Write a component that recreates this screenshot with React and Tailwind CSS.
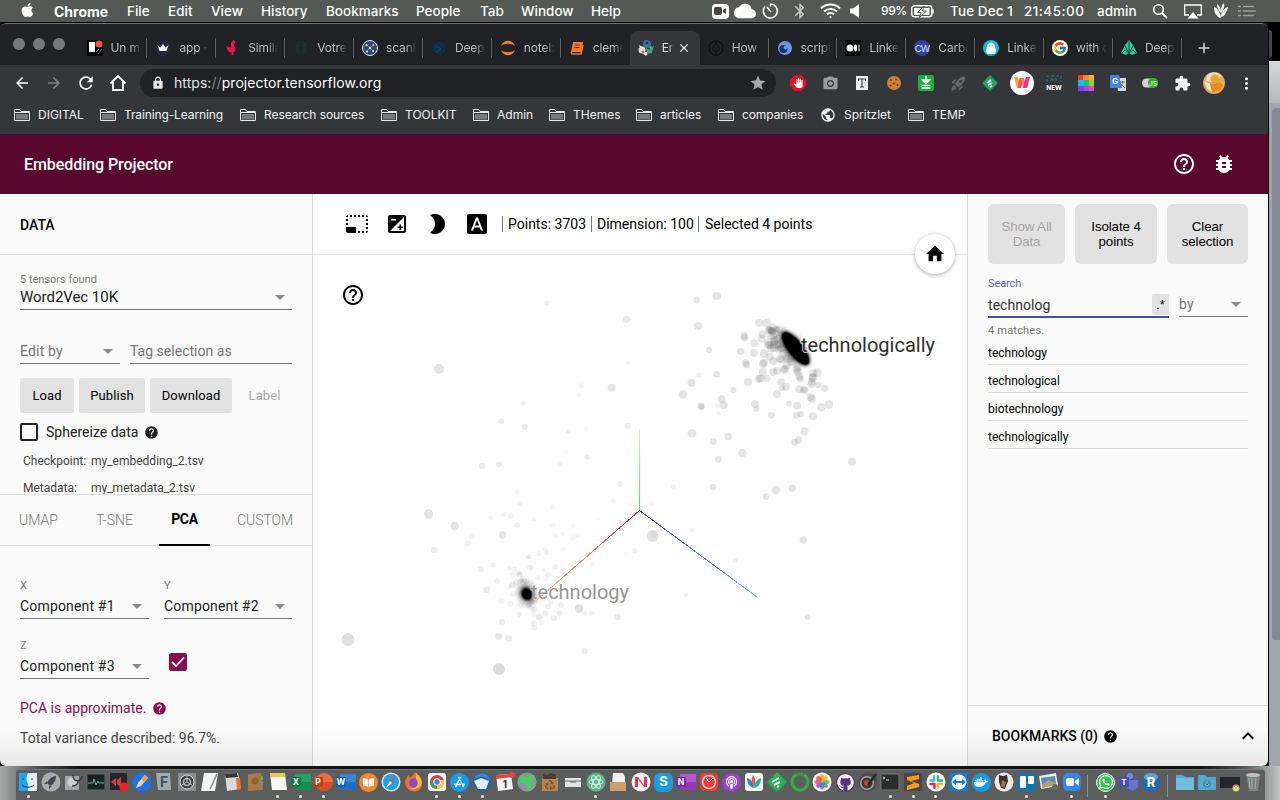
import React from 'react';
import {
  MdPhotoSizeSelectSmall, MdExposure, MdBrightness2, MdFontDownload, MdHelpOutline, MdBugReport,
  MdHome, MdHelp, MdExpandLess, MdArrowDropDown, MdArrowBack, MdArrowForward, MdRefresh, MdLock,
  MdStar, MdExtension, MdMoreVert, MdPublic, MdAdd, MdClose, MdPhotoCamera, MdCloud,
  MdBluetooth, MdRocketLaunch, MdPanTool,
} from 'react-icons/md';
import { FaApple, FaGithub, FaWhatsapp, FaDocker, FaPodcast, FaBookOpen, FaRecycle } from 'react-icons/fa';
import { FcGoogle } from 'react-icons/fc';

const MENUS = [
  ['Chrome', 'w-[73px] font-bold text-[14px]'], ['File', 'w-[41px]'], ['Edit', 'w-[43px]'], ['View', 'w-[50px]'],
  ['History', 'w-[65px]'], ['Bookmarks', 'w-[90px]'], ['People', 'w-[64px]'], ['Tab', 'w-[41px]'],
  ['Window', 'w-[70px]'], ['Help', 'w-[121px]'],
];

function MenuBar() {
  return (
    <div className="flex h-[23px] shrink-0 items-center border-b border-black bg-[#545956] pl-[20px] text-[13.5px] font-medium text-white">
      <FaApple className="mr-[19px] -mt-0.5 h-[16px] w-[15px]" />
      {MENUS.map(([t, c]) => <span key={t} className={'shrink-0 whitespace-nowrap ' + c}>{t}</span>)}
      <div className="flex h-[15px] w-[17px] shrink-0 items-center justify-center rounded-[4px] bg-white">
        <svg width="13" height="9" viewBox="0 0 13 9"><rect x="0" y="0" width="8" height="8" rx="2" fill="#444" /><path d="M9 3l3-2v6l-3-2z" fill="#444" /></svg>
      </div>
      <MdCloud className="ml-[5px] size-[22px] shrink-0" />
      <svg className="ml-[6px] shrink-0" width="17" height="18" viewBox="0 0 17 18" fill="none" stroke="white" strokeWidth="1.6"><path d="M8.5 1.5v3M8.5 2A7 7 0 1 1 3 4.5M9 10L5 5" /></svg>
      <MdBluetooth className="ml-[12px] size-[18px] shrink-0 text-[#c5c8c6]" />
      <svg className="ml-[11px] shrink-0" width="21" height="16" viewBox="0 0 21 16" fill="none" stroke="white" strokeWidth="2"><path d="M1 5.5a13.500 13.500 0 0 1 19 0M4 8.500a9.500 9.500 0 0 1 13 0M7 11.500a5 5 0 0 1 7 0" /><circle cx="10.500" cy="14" r="1" fill="white" stroke="none" /></svg>
      <svg className="ml-[9px] shrink-0" width="10" height="14" viewBox="0 0 10 14"><path d="M0 4.500h3L9 0v14L3 9.500H0z" fill="white" /></svg>
      <span className="ml-[21px] w-[30px] shrink-0 text-[12px] tracking-[-0.4px]">99%</span>
      <svg className="shrink-0" width="24" height="13" viewBox="0 0 24 13"><rect x=".8" y=".8" width="20" height="11" rx="2.500" fill="none" stroke="white" strokeWidth="1.400" /><rect x="3" y="3" width="15.500" height="6.800" fill="white" /><path d="M13 1L6.500 7.500H10L8.500 12.500 15.500 6H11.500z" fill="white" stroke="#545956" strokeWidth="1" /><path d="M22 4.500v4" stroke="white" strokeWidth="1.500" /></svg>
      <span className="ml-[15px] w-[74px] shrink-0 whitespace-nowrap tracking-[0.1px]">Tue Dec 1</span>
      <span className="w-[73px] shrink-0 whitespace-nowrap tracking-[0.45px]">21:45:00</span>
      <span className="w-[55px] shrink-0 whitespace-nowrap">admin</span>
      <svg className="shrink-0" width="16" height="16" viewBox="0 0 16 16" fill="none" stroke="white" strokeWidth="1.600"><circle cx="6.500" cy="6.500" r="4.800" /><path d="M10 10l5 5" strokeWidth="2" /></svg>
      <svg className="ml-[16px] shrink-0" width="18" height="15" viewBox="0 0 18 15"><path d="M5 11H.7V1h16.600v10H13" fill="none" stroke="white" strokeWidth="1.400" /><path d="M9 8l5.500 6.500h-11z" fill="white" /></svg>
      <svg className="ml-[12px] shrink-0" width="14" height="16" viewBox="0 0 14 16" fill="white"><path d="M0 4c4 1 6 5 7 11C2 14 0 9 0 4zM3 1c3 2 4 5 4 9C4 7 3 4 3 1zM7 8c0-4 1-6 3-8 1 4-1 7-3 10zM7 14c0-5 3-9 7-10-1 5-3 9-7 10z" /></svg>
      <svg className="ml-[10px] shrink-0" width="18" height="12" viewBox="0 0 18 12" stroke="#9a9d9b" strokeWidth="1.600"><path d="M0 1.500h3M5 1.500h11M0 6h3M5 6h13M0 10.500h3M5 10.500h11" /></svg>
    </div>
  );
}

const Fav = ({ children }) => <svg className="shrink-0" width="16" height="16" viewBox="0 0 16 16">{children}</svg>;

const TABS = [
  ['Un m', <Fav><rect width="16" height="16" rx="1" fill="#000" /><path d="M2 2h6v10H2z" fill="#fff" /><circle cx="12" cy="4" r="3.600" fill="#f4553f" /><path d="M9 12l3-3M11 14l4-5" stroke="#777" /></Fav>],
  ['app ·', <Fav><circle cx="8" cy="8" r="8" fill="#25283a" /><path d="M2.500 5l3 2.500L8 4l2.500 3.500 3-2.500-2 6h-7z" fill="#fff" /></Fav>],
  ['Simila', <Fav><path d="M9 0l2 1 .5 2-1.500 1v2c2 1 2 3 1 5l-2 2 .5 2H7.500V13C4 12 2 9 2.500 5c1 2 3 3 4.500 2V3z" fill="#e3174a" /></Fav>],
  ['Votre', <Fav><path d="M5 1h6l3 3v8l-4 3H6l-4-3V4zM4 8h8M8 1v14" fill="#16302a" stroke="#202124" /></Fav>],
  ['scanF', <Fav><circle cx="8" cy="8" r="7.500" fill="#2d4977" stroke="#dfe6ee" /><path d="M4 4l8 8M12 4l-8 8" stroke="#8fa6bf" strokeWidth=".7" /><circle cx="4.500" cy="5" r="1" fill="#fff" /><circle cx="11.500" cy="5" r="1" fill="#f0a070" /><circle cx="5" cy="11.500" r="1" fill="#fff" /><circle cx="11" cy="11" r="1" fill="#d9e58c" /><circle cx="8" cy="8" r="1.300" fill="#f0d0a0" /></Fav>],
  ['Deep', <Fav><path d="M8 1l6 3.500v7L10 14v2l-3-2-5-2.500v-7z" fill="#0d2f4a" /><path d="M5 6l5 3-5 3" stroke="#1d4666" fill="none" /></Fav>],
  ['noteb', <Fav><path d="M1 6C3-1 13-1 15 6 11 3 5 3 1 6zM1 10c2 7 12 7 14 0-4 3-10 3-14 0z" fill="#f37726" /></Fav>],
  ['cleme', <Fav><path d="M4 2h10l-2 10H2z" fill="#f4792b" /><path d="M6 5h5M5.500 7.500h5" stroke="#7a3510" /><path d="M2 12l1 2h9l2-9" fill="none" stroke="#f4792b" strokeWidth="1.500" /></Fav>],
  ['Er', <Fav><circle cx="9" cy="4" r="4" fill="#3b6f94" /><circle cx="4" cy="10" r="3.500" fill="#e6d6c6" /><path d="M1 5l4 2-3 1zM3 12h8l-3 4z" fill="#e8e8ee" /><path d="M8 8l4 2 4-5-2 8-5 1z" fill="#42a66c" /><path d="M11 7l3-1-1 4z" fill="#5cb4ea" /><circle cx="9" cy="3" r="1.300" fill="#1d3648" /><circle cx="5" cy="12" r="1.500" fill="#d5705b" /></Fav>],
  ['How', <Fav><circle cx="8" cy="8" r="7" fill="none" stroke="#101113" strokeWidth="1.400" /><path d="M8 2c-1 4-4 5-3 9h6c1-4-2-5-3-9zM8 8v6" fill="none" stroke="#101113" /></Fav>],
  ['script', <Fav><circle cx="8" cy="8" r="7" fill="#6d95ee" /><circle cx="6.500" cy="9" r="4" fill="#1c2d70" /><circle cx="8.500" cy="7.500" r="2" fill="#6d95ee" /></Fav>],
  ['Linke', <Fav><rect width="16" height="16" rx="1" fill="#000" /><circle cx="5" cy="8" r="3.500" fill="#fff" /><ellipse cx="10.500" cy="8" rx="1.600" ry="3.400" fill="#fff" /><path d="M14 4.700v6.600" stroke="#fff" /></Fav>],
  ['Carbo', <Fav><circle cx="8" cy="8" r="8" fill="#35409a" /><text x="8" y="11.500" fontSize="9.500" textAnchor="middle" fill="#dfe2ff" fontFamily="Inter, sans-serif" letterSpacing="-1">CW</text></Fav>],
  ['Linke', <Fav><circle cx="8" cy="8" r="8" fill="#10b9cf" /><path d="M4 7c0-6 8-6 8 0l1 4-1 3H4l-1-3z" fill="#fff" /><path d="M6 6h1M9 6h1" stroke="#10b9cf" /></Fav>],
  ['with c', <div className="flex size-4 shrink-0 items-center justify-center rounded-full bg-white"><FcGoogle className="size-[14px]" /></div>],
  ['Deep', <Fav><path d="M8 0l4 5 4 8-5 2-3-2-3 2-5-2 4-8z" fill="#2ec4a0" /><path d="M8 1v12M4 6l4 7 4-7M1 13l3-3 4 3 4-3 3 3" stroke="#18554c" fill="none" /></Fav>],
];

function TabStrip() {
  return (
    <div className="flex h-[42px] shrink-0 rounded-t-[6px] border-t border-[#6d706e] bg-[#202124] pt-[7px]">
      <div className="flex w-[78.5px] shrink-0 gap-[8px] pl-[13px] pt-[7px]">
        <i className="size-[12px] rounded-full bg-[#77787b]" /><i className="size-[12px] rounded-full bg-[#77787b]" /><i className="size-[12px] rounded-full bg-[#77787b]" />
      </div>
      {TABS.map(([t, icon], i) => {
        const active = i === 8;
        return (
          <div key={i} className={active ? 'flex h-[34px] w-[70px] shrink-0 items-center rounded-t-[8px] bg-[#35363a] pl-[8px]' : 'flex h-[34px] w-[68.900px] shrink-0 items-center pl-[8px]'}>
            {icon}
            <span className={(active ? 'w-[12px] text-[#dfe1e5] ' : 'w-[33px] text-[#b9bcc1] ') + 'ml-[8px] whitespace-nowrap text-[12px] tracking-[-0.15px] [mask-image:linear-gradient(to_right,black_60%,transparent_92%)]'}>{t}</span>
            {active ? <MdClose className="ml-[3px] size-[14px] text-white" /> : i === 7 ? null : <i className="ml-auto h-[20px] w-px bg-[#5b5d60]" />}
          </div>
        );
      })}
      <MdAdd className="ml-[13px] mt-[8px] size-[18px] text-[#d5d7da]" />
    </div>
  );
}

const Slot = ({ children }) => <div className="flex w-8 shrink-0 items-center justify-center">{children}</div>;

function Toolbar() {
  return (
    <div className="flex h-[36px] shrink-0 items-center bg-[#35363a] pl-[6px] text-white">
      <Slot><MdArrowBack className="size-[18px]" /></Slot>
      <Slot><MdArrowForward className="size-[18px] text-[#828387]" /></Slot>
      <Slot><MdRefresh className="size-[20px]" /></Slot>
      <Slot><svg width="18" height="18" viewBox="0 0 18 18" fill="none" stroke="white" strokeWidth="1.800"><path d="M1.500 9.500L9 2l7.500 7.500M4 8v8h10V8" /></svg></Slot>
      <div className="ml-[6px] flex h-[28px] w-[636px] shrink-0 items-center rounded-full bg-[#202124] pl-[11px] pr-[9px]">
        <MdLock className="size-[14px] text-[#e3e4e6]" />
        <div className="ml-[9px] -mt-px text-[14px] tracking-[0.06px]"><span className="text-[#e3e4e6]">https:</span><span className="text-[#85868a]">//</span><span>projector.tensorflow.org</span></div>
        <MdStar className="ml-auto size-[18px] text-[#a8a9ac]" />
      </div>
      <div className="ml-[6px] flex">
        <Slot><svg width="16" height="16" viewBox="0 0 16 16"><path d="M5 0h6l5 5v6l-5 5H5l-5-5V5z" fill="#ee0a22" /><foreignObject x="3" y="3" width="10" height="10"><MdPanTool className="block size-[10px] text-white" /></foreignObject></svg></Slot>
        <Slot><MdPhotoCamera className="size-[17px] text-[#9a9b9d]" /></Slot>
        <Slot><Fav><rect x="2" y="1" width="12" height="14" fill="#eee" /><path d="M4.500 6V4h7v2M8 4v8M6 12h4" stroke="#444" strokeWidth="1.200" fill="none" /></Fav></Slot>
        <Slot><Fav><circle cx="8" cy="8" r="7" fill="#cf7f3a" /><circle cx="5" cy="5" r="1" fill="#6b3414" /><circle cx="10" cy="4.500" r="1" fill="#6b3414" /><circle cx="8" cy="8.500" r="1" fill="#6b3414" /><circle cx="4.500" cy="10.500" r="1" fill="#6b3414" /><circle cx="11.500" cy="10" r="1" fill="#6b3414" /></Fav></Slot>
        <Slot><Fav><rect width="16" height="16" rx="2" fill="#19b03c" /><path d="M8 1v5M4.500 5h7L8 8.500zM3.500 10.500h9M3.500 13h9" stroke="white" fill="white" strokeWidth="1.500" /></Fav></Slot>
        <Slot><MdRocketLaunch className="size-[17px] text-[#66676a]" /></Slot>
        <Slot><Fav><path d="M8 0l8 8-8 8-8-8z" fill="#17a65a" /><path d="M5 8l4-3M6 10l4-2M8 12l2-1" stroke="white" strokeWidth="1.800" /></Fav></Slot>
        <Slot><svg className="shrink-0" width="24" height="24" viewBox="0 0 24 24"><circle cx="12" cy="12" r="12" fill="#fff" /><path d="M4 6h4l3 11H7z" fill="#f9a63d" /><path d="M9.500 7h4L11 17H7.500z" fill="#f34f60" /><path d="M11 7h3l3 10h-4z" fill="#f77d45" /><path d="M16 6h4l-3 11h-4z" fill="#f22a85" /></svg></Slot>
        <Slot><Fav><path d="M1 7V1h14v6" fill="none" stroke="#1f8096" strokeDasharray="3 2" /><path d="M5 6V4h2v2M10 3v3" fill="none" stroke="#1f8096" /><text x="8" y="14.500" textAnchor="middle" fontSize="6.500" fontWeight="700" fontFamily="Inter, sans-serif" fill="#fff">NEW</text></Fav></Slot>
        <Slot><Fav><path d="M0 0h5v5H0z" fill="#f53b30" /><path d="M5 0h11v5H5z" fill="#fd8b22" /><path d="M11 0h5v5h-5z" fill="#fcac2c" /><path d="M0 5h6v6H0z" fill="#16bdf2" /><path d="M6 5h5v6H6z" fill="#12c679" /><path d="M11 5h5v6h-5z" fill="#8ed42a" /><path d="M0 11h6v5H0z" fill="#7d42ee" /><path d="M6 11h5v5H6z" fill="#b042ee" /><path d="M11 11h5v5h-5z" fill="#e940d5" /></Fav></Slot>
        <Slot><Fav><path d="M6 3h10v13H8z" fill="#d3d8dd" /><path d="M0 0h9l3 13H0z" fill="#4385ee" /><text x="2" y="9" fontSize="8" fontWeight="700" fontFamily="Inter, sans-serif" fill="#fff">G</text><path d="M10 7h5M12.500 6v1c0 2-1 4-3 5M11 9l4 4" stroke="#65777f" fill="none" /></Fav></Slot>
        <Slot><Fav><rect x="0" y="3.500" width="16" height="9" rx="4.500" fill="#d3d5d6" /><circle cx="11" cy="8" r="5" fill="#32b322" /><text x="11" y="10.500" fontSize="6.500" textAnchor="middle" fontFamily="Inter, sans-serif" fill="#fff">JS</text></Fav></Slot>
        <Slot><MdExtension className="size-[17px] text-[#f1f3f4]" /></Slot>
        <Slot><svg width="22" height="22" viewBox="0 0 22 22"><circle cx="11" cy="11" r="11" fill="#dfaa62" /><path d="M4 3c5-4 12-3 14 1l-6 7-9-2z" fill="#efe0bd" /><circle cx="12" cy="7" r="4.500" fill="#e7a72c" /><path d="M2 12h9l6-2 3 3-4 6-9 1z" fill="#e98a19" /><path d="M1 9l6 3 2 8-5-3z" fill="#eee5d3" /></svg></Slot>
        <Slot><MdMoreVert className="size-[19px]" /></Slot>
      </div>
    </div>
  );
}

const MARKS = [
  ['DIGITAL', 'w-[86px]'], ['Training-Learning', 'w-[140px] tracking-[-0.12px]'], ['Research sources', 'w-[141px] tracking-[-0.08px]'], ['TOOLKIT', 'w-[92px]'],
  ['Admin', 'w-[76px]'], ['THemes', 'w-[87px]'], ['articles', 'w-[82px]'], ['companies', 'w-[102px] tracking-[-0.1px]'], ['Spritzlet', 'w-[88px]'], ['TEMP', 'w-[70px]'],
];

function BookmarkBar() {
  return (
    <div className="flex h-[33px] shrink-0 items-start bg-[#35363a] pl-[14px] pt-[5px] text-[12px] text-[#f1f1f2]">
      {MARKS.map(([t, w]) => (
        <div key={t} className={'flex h-[18px] shrink-0 items-center gap-2 whitespace-nowrap ' + w}>
          {t === 'Spritzlet' ? <MdPublic className="size-4 shrink-0" /> : (
            <svg className="shrink-0" width="16" height="14" viewBox="0 0 16 14"><path d="M2 6h12v5.500H2z" fill="#77797c" /><path d="M.500 12.500v-11h5l1.500 2h8.500v9zM.500 4.500h15" fill="none" stroke="#e8e9ea" /></svg>
          )}
          <span>{t}</span>
        </div>
      ))}
    </div>
  );
}

function Select({ label, value, muted, className }) {
  return (
    <div className={className}>
      {label && <div className="h-[13px] text-[11px] leading-[13px] tracking-[0.1px] text-[#7b7b7b]">{label}</div>}
      <div className={(muted ? 'text-[#757575] ' : 'text-[#212121] ') + 'flex h-[24px] items-center justify-between border-b border-[#737373] text-[14px] tracking-[0.17px]'}>
        <span className="whitespace-nowrap">{value}</span>
        <MdArrowDropDown className="-mt-px size-[24px] shrink-0 text-[#8a8a8a]" />
      </div>
    </div>
  );
}

function LeftPanel() {
  return (
    <div className="flex w-[313px] shrink-0 flex-col border-r border-[#dcdcdc] bg-[#fafafa]">
      <div className="flex h-[61px] shrink-0 items-center border-b border-[#dcdcdc] pl-5 pt-[3px] text-[14px] font-medium text-black">DATA</div>
      <div className="flex h-[239px] shrink-0 flex-col overflow-hidden px-5 pt-[18px]">
        <div className="shrink-0">
          <div className="h-[13px] text-[11px] leading-[13px] text-[#7b7b7b]">5 tensors found</div>
          <div className="flex h-[24px] items-center justify-between border-b border-[#6f6f6f] text-[15px] tracking-[-0.04px] text-[#212121]">Word2Vec 10K<MdArrowDropDown className="-mt-px size-[24px] text-[#8a8a8a]" /></div>
        </div>
        <div className="mt-[30px] flex shrink-0 gap-[10px]">
          <Select value="Edit by" muted className="w-[100px]" />
          <div className="flex h-[24px] w-[162px] items-center border-b border-[#737373] text-[14px] tracking-[0.02px] text-[#757575]">Tag selection as</div>
        </div>
        <div className="mt-[14px] flex h-[35px] shrink-0 gap-[5px] text-[13px] tracking-[0.1px] text-black">
          <div className="flex w-[54px] shrink-0 items-center justify-center rounded-[2px] bg-[#e2e2e2]">Load</div>
          <div className="flex w-[66px] shrink-0 items-center justify-center rounded-[2px] bg-[#e2e2e2]">Publish</div>
          <div className="flex w-[82px] shrink-0 items-center justify-center rounded-[2px] bg-[#e2e2e2]">Download</div>
          <div className="flex w-[55px] shrink-0 items-center justify-center text-[#a8a8a8]">Label</div>
        </div>
        <div className="mt-[10px] flex h-[18px] shrink-0 items-center text-[14px] tracking-[0.02px] text-[#212121]">
          <i className="size-[18px] rounded-[2px] border-2 border-[#212121]" /><span className="ml-2">Sphereize data</span><MdHelp className="ml-[6px] size-[15px]" />
        </div>
        <div className="mt-[13px] flex h-[14px] shrink-0 pl-[3px] text-[12px] leading-[14px] text-[#424242]"><span className="w-[68px]">Checkpoint:</span>my_embedding_2.tsv</div>
        <div className="mt-[13px] flex h-[14px] shrink-0 pl-[3px] text-[12px] leading-[14px] text-[#424242]"><span className="w-[68px]">Metadata:</span>my_metadata_2.tsv</div>
      </div>
      <div className="flex h-[52px] shrink-0 items-center border-y border-[#dcdcdc] pl-[19px] text-[14px] font-light text-[#777]">
        <span className="w-[77px]">UMAP</span><span className="w-[63px]">T-SNE</span>
        <span className="flex h-[51px] w-[51px] items-center justify-center self-start border-b-2 border-black font-bold tracking-[-0.3px] text-black">PCA</span>
        <span className="ml-[27px] tracking-[-0.05px]">CUSTOM</span>
      </div>
      <div className="flex flex-1 flex-col px-5 pt-[33px]">
        <div className="flex gap-[15px]"><Select label="X" value="Component #1" className="flex w-[129px] flex-col gap-[3px]" /><Select label="Y" value="Component #2" className="flex w-[128px] flex-col gap-[3px]" /></div>
        <div className="mt-[20px] flex gap-[20px]"><Select label="Z" value="Component #3" className="flex w-[129px] flex-col gap-[3px]" /><div className="mt-[14px] flex size-[18px] items-center justify-center rounded-[2px] bg-[#880e4f]"><svg width="14" height="12" viewBox="0 0 14 12"><path d="M1 6l4 4 8-8.500" fill="none" stroke="white" strokeWidth="1.800" /></svg></div></div>
        <div className="mt-[20px] flex h-[18px] items-center whitespace-nowrap text-[14px] text-[#880e4f]">PCA is approximate.<MdHelp className="ml-[6px] size-[15px]" /></div>
        <div className="mt-[12px] whitespace-nowrap text-[14px] leading-[18px] text-[#444]">Total variance described: 96.7%.</div>
      </div>
    </div>
  );
}

// Each point is [x, y, radius, opacity %], in thirds of a pixel from the origin of its field.
const WEST = [
  [440,69,8,5],[680,118,11,8],[684,248,7,4],[117,267,15,11],[544,318,8,5],[635,323,12,10],[537,344,7,3],[370,371,8,6],[303,424,9,8],[374,440,9,8],[683,437,9,7],[505,454,8,6],[558,446,7,2],[501,516,6,1],[562,531,8,7],[478,551,8,4],[247,558,10,8],[297,553,9,8],[660,612,8,6],[640,661,8,5],[692,670,7,2],[756,670,8,3],[353,636,8,4],[359,670,8,4],[457,681,8,4],[86,702,14,10],[164,738,13,11],[271,714,8,4],[312,704,8,4],[331,709,8,5],[402,717,7,4],[351,735,9,6],[460,736,8,4],[518,738,7,3],[596,717,7,2],[216,768,9,6],[203,791,9,6],[308,765,11,10],[467,766,8,4],[487,762,7,4],[518,774,8,4],[533,767,7,4],[103,810,10,7],[490,808,8,3],[435,807,7,3],[418,821,8,4],[439,817,8,6],[389,829,8,6],[381,831,7,5],[679,820,7,2],[704,812,8,5],[758,768,18,11],[761,763,10,4],[577,851,8,3],[516,847,8,3],[466,860,8,5],[278,854,8,6],[243,868,9,6],[328,865,8,5],[344,868,8,5],[391,863,9,7],[431,870,7,4],[444,883,8,5],[518,881,8,5],[414,893,8,5],[337,885,9,5],[358,884,9,5],[291,903,9,6],[260,929,10,7],[349,905,9,7],[337,915,10,9],[326,922,8,4],[439,895,9,4],[338,943,9,5],[304,963,9,5],[331,971,9,5],[306,1025,9,7],[358,1003,8,6],[361,974,9,6],[435,1000,9,6],[417,1011,10,9],[424,1027,8,6],[401,1031,9,6],[403,1043,9,6],[462,1015,9,6],[479,1000,9,6],[483,976,9,6],[537,986,13,12],[553,1000,8,5],[575,1000,8,5],[652,1011,10,8],[296,1069,11,9],[326,1076,10,8],[554,1114,9,7],[297,1167,18,13],[443,980,9,6],[453,966,9,5],[490,912,9,5],
];
const EAST = [
  [110,60,10],[170,48,13],[114,138,12],[147,210,9],[117,285,8],[170,283,10],[95,308,12],[69,343,13],[185,358,12],[191,376,12],[123,378,11],[125,381,9],[173,377,8],[176,401,7],[220,331,9],[285,372,12],[289,387,9],[334,406,10],[96,460,13],[160,484,10],[205,470,11],[175,538,10],[247,519,13],[40,621,8],[159,621,10],[348,630,13],[397,625,11],[319,650,10],[404,487,10],[416,480,11],[433,454,12],[409,406,10],[422,402,10],[459,409,12],[411,377,12],[387,371,9],[484,382,12],[507,373,13],[494,325,11],[475,315,10],[472,278,13],[576,545,12],[430,780,11],[96,750,7],[225,842,8],[151,853,7],[78,946,7],[443,1011,9],[297,128,12],[319,129,13],[253,167,11],[254,174,11],[283,190,12],[242,214,11],[282,218,12],[257,249,11],[260,254,11],[264,306,12],[308,276,12],[296,296,12],[302,295,12],[321,295,11],[351,342,12],[363,306,11],[378,320,12],[366,325,9],[418,328,12],[433,330,13],[456,356,12],[451,351,12],[432,331,9],[309,252,12],[312,248,12],[308,163,12],[305,176,12],[329,150,12],[326,150,11],[336,155,12],[331,150,10],[349,147,11],[326,187,13],[324,195,12],[334,205,13],[312,221,13],[330,230,12],[343,204,13],[351,193,12],[340,243,13],[360,236,13],[364,239,12],[340,276,12],[352,272,12],[372,270,12],[375,266,12],[381,256,12],[394,247,12],[409,268,12],[414,275,12],[418,289,12],[421,296,11],[460,280,12],[458,291,12],[455,305,12],[454,313,12],[458,294,12],[362,204,12],[343,180,12],[330,195,12],[384,237,12],[413,263,12],
];

const spread = (n, seed) => Array.from({ length: n }, (_, i) => {
  const a = i * 2.39996 + seed;
  return [Math.cos(a) * Math.sqrt(i / n), Math.sin(a) * Math.sqrt(i / n)];
});

function Plot() {
  return (
    <svg className="block" width="654" height="511" viewBox="313 255 654 511">
      <defs>
        <linearGradient id="up" gradientUnits="userSpaceOnUse" x1="639" y1="510" x2="639" y2="429"><stop stopColor="#30f060" /><stop offset="1" stopColor="#dcf8c0" /></linearGradient>
        <linearGradient id="sw" gradientUnits="userSpaceOnUse" x1="639" y1="510" x2="534" y2="602"><stop stopColor="#f04848" /><stop offset="1" stopColor="#ffc58a" /></linearGradient>
        <linearGradient id="se" gradientUnits="userSpaceOnUse" x1="640" y1="510" x2="757" y2="597"><stop stopColor="#3c48f0" /><stop offset="1" stopColor="#76cbf8" /></linearGradient>
        <filter id="soft" x="-50%" y="-50%" width="200%" height="200%"><feGaussianBlur stdDeviation="1" /></filter>
        <filter id="halo" x="-50%" y="-50%" width="200%" height="200%"><feGaussianBlur stdDeviation="2.500" /></filter>
      </defs>
      <g transform="translate(400 280) scale(.33333)">
        {WEST.map(([x, y, r, o], i) => <circle key={i} cx={x} cy={y} r={r} fill="#000" fillOpacity={o / 100} />)}
      </g>
      <circle cx="348" cy="639.500" r="6.500" fillOpacity=".12" />
      <g transform="translate(660 280) scale(.33333)">
        {EAST.map(([x, y, r], i) => <circle key={i} cx={x} cy={y} r={r} fill="#000" fillOpacity={r < 9 ? 0.05 : 0.1} />)}
      </g>
      <g transform="translate(784 344) rotate(52)">
        {spread(40, 1).map(([x, y], i) => <circle key={i} cx={x * 22} cy={y * 9} r="3.900" fillOpacity=".09" />)}
      </g>
      <g transform="translate(795.500 348.500) rotate(52)">
        <ellipse rx="21" ry="9" fillOpacity=".35" filter="url(#halo)" />
        <ellipse rx="20.500" ry="8" filter="url(#soft)" /><ellipse rx="19.500" ry="7" />
      </g>
      <g transform="translate(527 593) rotate(70)">
        {spread(50, 2).map(([x, y], i) => <circle key={i} cx={x * 16} cy={y * 10} r="2.700" fillOpacity=".04" />)}
        {spread(22, 5).map(([x, y], i) => <circle key={i} cx={x * 25} cy={y * 4} r="2.700" fillOpacity=".05" />)}
      </g>
      <g transform="translate(526.800 594) rotate(65)"><ellipse rx="10" ry="8" fillOpacity=".35" filter="url(#halo)" /><ellipse rx="6.500" ry="5.500" filter="url(#soft)" /><ellipse rx="5.300" ry="4.600" /></g>
      <path d="M639.500 429v82" stroke="url(#up)" />
      <path d="M639.500 510.500L534 602.500" stroke="url(#sw)" shapeRendering="crispEdges" />
      <path d="M639.500 510.500L757 597" stroke="url(#se)" shapeRendering="crispEdges" />
      <g fontFamily="Roboto, sans-serif" fontSize="20" paintOrder="stroke" stroke="#fff" strokeOpacity=".7" strokeWidth="2">
        <text x="801" y="352" textLength="134" fill="#2f2f2f">technologically</text>
        <text x="531" y="599" textLength="98" fill="#969696" strokeOpacity=".3">technology</text>
      </g>
    </svg>
  );
}

function Center() {
  return (
    <div className="flex w-[654px] shrink-0 flex-col bg-white">
      <div className="flex h-[61px] shrink-0 items-center border-b border-[#e8e8e8] pl-[32px] text-[14px] text-black">
        <div className="flex w-[157px] gap-[16px]"><MdPhotoSizeSelectSmall className="size-[24px]" /><MdExposure className="size-[24px]" /><MdBrightness2 className="size-[24px]" /><MdFontDownload className="size-[24px]" /></div>
        <span className="flex h-4 w-[89px] items-center whitespace-nowrap border-l border-[#777] pl-[5px]">Points: 3703</span>
        <span className="flex h-4 w-[107px] items-center whitespace-nowrap border-l border-[#777] pl-[5px]">Dimension: 100</span>
        <span className="flex h-4 items-center whitespace-nowrap border-l border-[#777] pl-[6px]">Selected 4 points</span>
      </div>
      <div className="relative h-[511px]">
        <Plot />
        <MdHelpOutline className="absolute left-[28px] top-[28px] size-[24px] text-black" />
        <div className="absolute left-[602px] -top-[21px] flex size-[40px] items-center justify-center rounded-full bg-white shadow-[0_1px_4px_rgba(0,0,0,.35)]"><MdHome className="size-[22px] text-black" /></div>
      </div>
    </div>
  );
}

function RightPanel() {
  return (
    <div className="flex w-[301px] shrink-0 flex-col border-l border-[#dcdcdc] bg-[#fafafa]">
      <div className="flex h-[511px] flex-col px-5 pt-[10px]">
        <div className="flex h-[60px] shrink-0 gap-[10px] text-center font-['Liberation_Sans',sans-serif] text-[13.300px] leading-[15px] tracking-[-0.1px] text-black">
          <div className="flex w-[77px] items-center justify-center rounded-[6px] bg-[#e2e2e2] text-[#a5a5a5]">Show All<br />Data</div>
          <div className="flex w-[82px] items-center justify-center rounded-[6px] bg-[#e2e2e2]">Isolate 4<br />points</div>
          <div className="flex w-[81px] items-center justify-center rounded-[6px] bg-[#e2e2e2]">Clear<br />selection</div>
        </div>
        <div className="mt-[13px] h-[13px] text-[11px] leading-[13px] tracking-[-0.1px] text-[#5666c0]">Search</div>
        <div className="flex h-[28px] shrink-0 items-start gap-[10px] pt-[3px]">
          <div className="flex h-[25px] w-[181px] items-center justify-between border-b-2 border-[#3f51b5] text-[14px] tracking-[0.05px] text-[#333]"><span className="pt-px">technolog</span><span className="flex h-[21px] w-[17px] items-center justify-center rounded-[2px] bg-[#e2e2e2] font-['Liberation_Sans',sans-serif] text-[13px] text-black">.*</span></div>
          <Select value="by" muted className="w-[69px]" />
        </div>
        <div className="mt-[6px] h-[13px] text-[11px] leading-[13px] tracking-[0.2px] text-[#757575]">4 matches.</div>
        <div className="text-[12px] text-black">
          {['technology', 'technological', 'biotechnology', 'technologically'].map((w) => <div key={w} className="flex h-[28px] items-center border-b border-[#dcdcdc] pt-[5px]">{w}</div>)}
        </div>
      </div>
      <div className="flex h-[61px] items-center border-t border-[#dcdcdc] pl-6 pr-[8px] text-[14px] font-medium text-black">BOOKMARKS (0)<MdHelp className="ml-[5px] size-[15px]" /><MdExpandLess className="ml-auto size-[24px]" /></div>
    </div>
  );
}

const I = ({ children }) => <svg width="20" height="20" viewBox="0 0 20 20">{children}</svg>;
const Letter = ({ x = 10, y = 14, s = 11, f = '#fff', children }) => <text x={x} y={y} fontSize={s} fill={f} fontWeight="700" textAnchor="middle" fontFamily="Inter, sans-serif">{children}</text>;
const Office = ({ c, d, l, round }) => <I>{round ? <circle cx="11" cy="10" r="9" fill={c} /> : <rect x="4" y="2" width="16" height="16" rx="1" fill={c} />}<path d={round ? 'M4 10h16a9 9 0 0 1-16 6z' : 'M4 10h16v8H4z'} fill={d} fillOpacity=".6" /><rect x="0" y="5" width="10" height="10" rx="1" fill={d} /><Letter x={5} y={13} s={8.5}>{l}</Letter></I>;
const Glyph = ({ bg, children }) => <div className={'flex size-[19px] items-center justify-center text-white ' + bg}>{children}</div>;
const Ring = ({ c, children }) => <I><circle cx="10" cy="10" r="9.500" fill={c} />{children}</I>;

const DOCK = [
  [<I><rect x="1" y="1" width="18" height="18" fill="#e9eef5" /><path d="M1 1h9c-2 4-2 8 0 11v7H1z" fill="#22a5f2" /><path d="M5 6v2M14 6v2M4 13c4 3 8 3 12 0" stroke="#16344f" fill="none" /></I>, 1],
  [<Ring c="#a9adb0"><path d="M15 4c-4 0-7 3-9 7l3 3c4-2 6-6 6-10zM6 9l-3 3h3M11 14l-3 3v-3" fill="#45484b" /></Ring>],
  [<I><rect x="1" y="4" width="14" height="14" fill="#a5a7a8" /><circle cx="8" cy="10" r="4.500" fill="#cfd0d1" /><path d="M9 3c0 8 9 7 9 1M14 9c0 4-3 5-6 5" fill="none" stroke="#33373a" strokeWidth="1.300" /></I>],
  [<I><rect x="1" y="2" width="18" height="16" fill="#192122" stroke="#666" /><path d="M2 11h5l1-4 2 6 2-4 1 2h5" fill="none" stroke="#58b79c" /></I>],
  [<I><rect x="1" y="1" width="17" height="17" fill="#25272b" /><path d="M2 10l5-4v8zM8 8l4-3v10l-4-3z" fill="#da3b3b" /><circle cx="15" cy="15" r="4.500" fill="#e62231" /></I>],
  [<Ring c="#1e6ff1"><path d="M4 16l2-5 7-8 3 3-7 8z" fill="#f4d698" /><path d="M13 3l3 3-4 4-3-3z" fill="#f5a523" /></Ring>],
  [<I><path d="M2 1h14l1 17H4z" fill="#9babb0" /><Letter y={15} s={14} f="#46535a">F</Letter></I>],
  [<I><rect x="1" y="1" width="18" height="18" fill="#898b8e" /><circle cx="10" cy="10" r="7" fill="#3a3b3d" stroke="#ddd" /><circle cx="10" cy="10" r="3.500" fill="none" stroke="#bbb" strokeWidth="1.500" /><path d="M10 10V4M10 10l5 3M10 10l-5 3" stroke="#bbb" /></I>],
  [<I><path d="M4 1h14l-3 18H1z" fill="#f4f4f2" /><path d="M17 2l-7 15" stroke="#828b94" strokeWidth="1.500" /></I>],
  [<I><path d="M2 2l13-1 3 16-14 2z" fill="#dadada" /><path d="M2 2l12-1 1 4-12 1z" fill="#33363b" /><path d="M13 6h4l1 11-4 1z" fill="#f07128" /></I>],
  [<I><path d="M3 2l13-1 2 17-15 1z" fill="#aa7949" /><circle cx="10" cy="9" r="3.500" fill="#8b6238" /><path d="M16 4h2v4h-2z" fill="#60a96b" /><path d="M16 9h2v4h-2z" fill="#4f9cc7" /></I>],
  [<I><path d="M2 1h15l2 17H4z" fill="#f9f8f1" /><path d="M2 1h15v4H3z" fill="#f2ca45" /></I>, 1],
  [<Office c="#21a366" d="#107c41" l="X" />, 1],
  [<Office c="#ed6c47" d="#c43e1c" l="P" round />, 1],
  [<Office c="#3487d8" d="#185abd" l="W" />],
  [<Glyph bg="rounded-full bg-[#f5882e]"><FaBookOpen className="size-[11px]" /></Glyph>],
  [<Ring c="#dfe5e9"><circle cx="10" cy="10" r="8" fill="#259de4" /><path d="M15 4l-4 7-2-2z" fill="#f3423b" /><path d="M5 16l4-7 2 2z" fill="#fff" /></Ring>],
  [<I><path d="M10 2l1-2 5 5c2 3 4 9-1 13-4 3-11 1-13-4C0 10 2 5 5 3l1 3z" fill="#fb6b2c" /><circle cx="10" cy="11" r="5" fill="#8a4bd0" /><path d="M12 1c4 4 7 7 5 12-2 4-8 6-12 3 8 2 11-5 7-9z" fill="#fdbe2c" /></I>],
  [<I><rect x="1" y="1" width="18" height="18" rx="3" fill="#f7f7f7" /><circle cx="10" cy="10" r="7" fill="#e34133" /><path d="M3.500 7L10 17A7 7 0 0 1 3.500 7z" fill="#2da44f" /><path d="M10 17a7 7 0 0 0 7-9h-7z" fill="#f7ca3c" /><circle cx="10" cy="10" r="3.400" fill="#4385ed" stroke="#fff" /></I>, 1],
  [<Glyph bg="rounded-full bg-[#169bf3]"><svg width="13" height="13" viewBox="0 0 13 13"><path d="M7.500 1L3 10M5.500 1L10 10M1 8.500h7M10 8.500h2M2.500 11l.5-1M10.500 11l-.5-1" stroke="white" strokeWidth="1.500" /></svg></Glyph>, 1],
  [<Ring c="#2362ad"><path d="M2 9l7-3 8 3-3 8H6z" fill="#e4edf4" /><path d="M2 7C5-1 18 0 18 9c-3-4-10-6-16-2z" fill="#3d87d5" /></Ring>, 1],
  [<I><path d="M1 3l15-1 2 15-15 2z" fill="#f4f4f4" /><path d="M1 3l15-1v3L1 7z" fill="#e3463c" /><Letter y={16} s={10} f="#333">1</Letter><circle cx="17" cy="3" r="3" fill="#f33e38" /></I>],
  [<Ring c="#978da9"><path d="M4 3l6 2 5-3 3 6-5 2 3 4-5 4-3-6-6-1z" fill="#50ca68" /><circle cx="10" cy="10" r="9" fill="none" stroke="#56bd74" /></Ring>],
  [<I><path d="M2 6h16v13H2z" fill="#b58650" /><path d="M3 2l4 1 4-2 5 2v4H3z" fill="#4b3b35" /><foreignObject x="5" y="8" width="10" height="10"><FaRecycle className="block size-[10px] text-[#78502b]" /></foreignObject></I>],
  [<I><rect x="2" y="6" width="16" height="9" fill="#e6e6e6" /><path d="M2 9h16M7 10h6" stroke="#8d8d8d" strokeWidth="1.500" /></I>],
  [<Ring c="#5fb58b"><g fill="none" stroke="#d8f1e5"><ellipse cx="10" cy="10" rx="7" ry="2.700" /><ellipse cx="10" cy="10" rx="7" ry="2.700" transform="rotate(60 10 10)" /><ellipse cx="10" cy="10" rx="7" ry="2.700" transform="rotate(120 10 10)" /></g></Ring>, 1],
  [<I><path d="M5 1h10l2 4v7H4z" fill="#f3f2ee" /><path d="M2 10h16v9H2z" fill="#d0a06a" /></I>],
  [<Ring c="#f5f5f5"><path d="M4 15V5h3l6 8V5h3v10h-3L7 7v8z" fill="#e8344e" /></Ring>],
  [<Glyph bg="rounded-[6px] bg-[#1c9de0]"><span className="text-[13px] font-bold">S</span></Glyph>],
  [<Office c="#b657cf" d="#7a25a5" l="N" />],
  [<I><rect x="1" y="1" width="18" height="18" rx="4" fill="#ea3b36" /><circle cx="10" cy="10" r="6.500" fill="none" stroke="#ffd3cd" strokeWidth="1.500" /><path d="M7 6l3 4 4-4" fill="none" stroke="#fff" /></I>],
  [<Glyph bg="rounded-full bg-[#a13cd5]"><FaPodcast className="size-[13px]" /></Glyph>],
  [<I><rect x="1" y="1" width="18" height="18" rx="3" fill="#f7f7f7" /><path d="M3 6c4 1 6 4 7 10-5-1-7-5-7-10z" fill="#278cdf" /><path d="M9 3c3 4 3 8 1 12-3-4-3-8-1-12z" fill="#e35a54" /><path d="M17 6c-4 1-6 4-7 10 5-1 7-5 7-10z" fill="#29afa4" /></I>],
  [<I><path d="M10 0l10 10-10 10L0 10z" fill="#22b455" /><path d="M5 10l7-4M7 13l6-3M10 15l2-1" stroke="#fff" strokeWidth="2" /></I>],
  [<I><circle cx="10" cy="10" r="8" fill="none" stroke="#31ae43" strokeWidth="3" strokeDasharray="35 1 1 1 2 1" /></I>],
  [<Ring c="#f5f5f5">{['#f5a12f', '#e7c236', '#84b94a', '#45a485', '#4d83cd', '#8c62b5', '#d35a93', '#e95d47'].map((c, i) => <ellipse key={c} cx="10" cy="6" rx="2.300" ry="3.400" fill={c} fillOpacity=".9" transform={`rotate(${i * 45} 10 10)`} />)}</Ring>],
  [<Glyph bg="rounded-full bg-[#5b3185]"><FaGithub className="size-[17px]" /></Glyph>],
  [<Ring c="#4c4d50"><circle cx="9" cy="11" r="7" fill="#aaa59a" /><circle cx="9" cy="11" r="5.500" fill="#35383b" /><circle cx="9" cy="11" r="3" fill="#c24638" /><path d="M18 2l-8 11" stroke="#23272a" strokeWidth="2.500" /></Ring>],
  [<I><rect x="1" y="2" width="18" height="16" fill="#2a2d2e" stroke="#777" /><path d="M3 5l2 1-2 1M6 8h3" stroke="#ddd" fill="none" /></I>, 1],
  [<I><rect x="1" y="1" width="18" height="18" fill="#484848" /><path d="M16 3v4L8 9l8 3v3L4 18v-4l7-3-7-3V5z" fill="#f99a21" /></I>, 1],
  [<Ring c="#f6f6f6"><g strokeWidth="2.400" strokeLinecap="round"><path d="M8 4.500v4M4.500 8.500h2" stroke="#36bde9" /><path d="M12 4.500v3M12 8.500h4" stroke="#30b67c" /><path d="M12 12.500v3M13 12h3" stroke="#e8b22d" /><path d="M4.500 12h4M8.500 13v3" stroke="#df245d" /></g></Ring>, 1],
  [<I><rect x="1" y="1" width="18" height="18" fill="#087ce0" /><circle cx="10" cy="10" r="7.500" fill="#f4f7fa" /><path d="M3 10l4-3v2h6V7l4 3-4 3v-2H7v2z" fill="#087ce0" /></I>],
  [<Glyph bg="rounded-full bg-[#149be7]"><FaDocker className="size-[14px]" /></Glyph>],
  [<Ring c="#eeebe6"><path d="M5 3l4 1 4-1 1 6-3 8-4-1-2-6z" fill="#403027" /><path d="M8 8l4 2-2 6-3-2z" fill="#9e7551" /></Ring>],
  [<I><rect x="1" y="1" width="18" height="18" rx="3" fill="#0c75b6" /><rect x="3" y="4" width="6" height="12" rx="1" fill="#fff" /><rect x="11" y="4" width="6" height="8" rx="1" fill="#fff" /></I>, 1],
  [<I><path d="M0 4l17-3 2 13L2 17z" fill="#e3edf2" /><path d="M2 6l14-2 1 7-14 2z" fill="#568abc" /><path d="M3 13l6-5 8 3v2L3 16z" fill="#b6a06b" /><circle cx="16" cy="15" r="3" fill="#676c70" /></I>],
  [<I><rect x="1" y="1" width="18" height="18" rx="5" fill="#3186f3" /><rect x="4" y="6" width="8" height="8" rx="2" fill="#fff" /><path d="M13 9l4-3v8l-4-3z" fill="#fff" /></I>, 1],
  'sep',
  [<Glyph bg="rounded-full border border-white bg-[#31c455]"><FaWhatsapp className="size-[16px]" /></Glyph>, 1],
  [<I><circle cx="12" cy="4" r="3" fill="#7b83eb" /><circle cx="17" cy="6" r="2" fill="#5059c9" /><path d="M8 8h12v7l-5 4-6-3z" fill="#6973d2" /><rect x="1" y="5" width="10" height="10" rx="1" fill="#454eb2" /><Letter x={6} y={13} s={8}>T</Letter></I>],
  [<Ring c="#2667b3"><ellipse cx="10" cy="5" rx="7" ry="4" fill="#77addd" fillOpacity=".8" /><Letter y={15} s={13}>R</Letter></Ring>],
  'sep',
  [<I><path d="M1 3h7l2 2h9v13H1z" fill="#55aacb" /><path d="M1 6h18v12H1z" fill="#70bedb" /></I>],
  [<I><path d="M1 3h7l2 2h9v13H1z" fill="#55aacb" /><circle cx="10" cy="12" r="4" fill="#4294b7" /><path d="M10 9v5M8 12l2 2 2-2" stroke="#75bddb" /></I>],
  [<I><rect x="0" y="5" width="20" height="11" fill="#232729" /><circle cx="16" cy="16" r="3.500" fill="#e9c94b" /><path d="M13 15a3.500 3.500 0 0 1 6 0" fill="#e94334" /><circle cx="16" cy="16" r="1.500" fill="#4285f4" stroke="white" /></I>],
  [<I><path d="M3 3h14l-2 16H6z" fill="#7b8181" /><ellipse cx="10" cy="3" rx="7" ry="2" fill="#bdc0bd" /><path d="M6 6l1 11M9 6v11M13 6l-1 11" stroke="#aaafaa" /></I>],
];

function Dock() {
  return (
    <div className="flex h-[34px] shrink-0 bg-[linear-gradient(to_right,#a5aaa8_0,#4a4f4d_40px,#111_80px,#111_1200px,#4b514f_1240px,#bfc6c3)] pl-[16px] pr-[15px] pt-[3px]">
      <div className="flex flex-1 items-start rounded-t-[4px] border-t border-[#777a78] bg-[#5b5e5d] pl-[1px] pt-[2px]">
        {DOCK.map((d, i) => d === 'sep' ? <i key={i} className={(i < 50 ? 'ml-[4px] mr-[6px]' : 'mx-[5px]') + ' mt-[3px] h-[22px] w-px shrink-0 bg-[#8c8f8e]'} /> : (
          <div key={i} className="flex w-[22.700px] shrink-0 flex-col items-center">
            <div className="flex h-[20px] items-center">{d[0]}</div>
            {d[1] && <i className="mt-[3px] size-[3px] rounded-full bg-[#e7e8e7]" />}
          </div>
        ))}
      </div>
    </div>
  );
}

export default function App() {
  return (
    <div className="flex h-[800px] w-[1280px] flex-col overflow-hidden bg-[#111] font-[Inter,sans-serif] antialiased">
      <MenuBar />
      <div className="flex h-[743px] shrink-0">
        <div className="relative flex w-[1268px] shrink-0 flex-col overflow-hidden rounded-[6px]">
          <TabStrip />
          <Toolbar />
          <BookmarkBar />
          <div className="flex h-[60px] shrink-0 items-center bg-[#5a072e] pl-6 pr-[32px] font-[Roboto,sans-serif] text-[16px] text-white">
            <span className="pt-px font-medium tracking-[-0.07px]">Embedding Projector</span>
            <MdHelpOutline className="ml-auto size-[24px]" /><MdBugReport className="ml-4 size-[24px]" />
          </div>
          <div className="flex h-[572px] shrink-0 font-[Roboto,sans-serif]">
            <LeftPanel /><Center /><RightPanel />
          </div>
          <div className="pointer-events-none absolute inset-x-0 bottom-0 h-[36px] bg-linear-to-b from-transparent to-black/7" />
        </div>
        <div className="flex flex-1 flex-col border-l border-black bg-[#a3a5ac]">
          <div className="h-[38px] bg-black pt-[7px]"><div className="h-[28px] w-[3px] rounded-r bg-[#45474a]" /></div>
          <div className="h-[43px] border-b border-[#aaa] bg-linear-to-b from-[#d6d7da] to-[#b8b9bd]" />
          <div className="h-[536px] pl-[3px] pt-[4px]"><div className="h-full rounded-l-[4px] bg-[#858994]" /></div>
        </div>
      </div>
      <Dock />
    </div>
  );
}
